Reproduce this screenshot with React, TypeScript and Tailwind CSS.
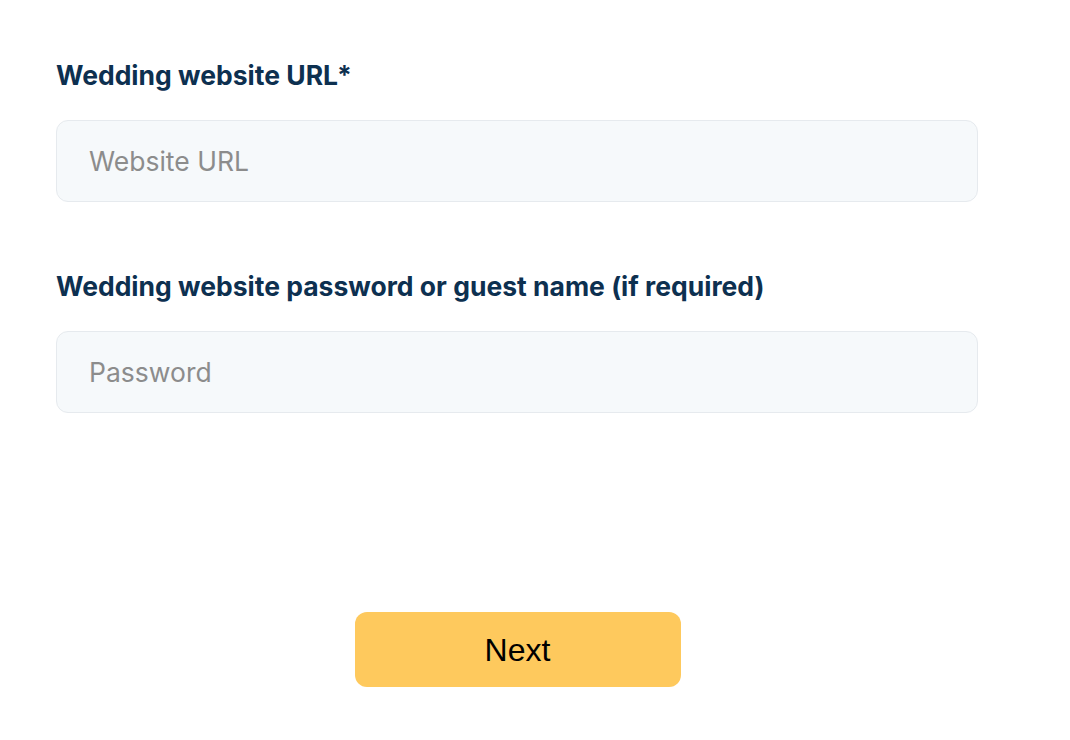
import React from "react";

export default function App() {
  return (
    <div className="min-h-screen bg-white" style={{ fontFamily: "Inter, 'Noto Sans', sans-serif" }}>
      <div className="pl-[56px] pt-[58px] w-[978px]">
        <label className="block text-[26.5px] leading-[34px] font-bold text-[#0d3050]">Wedding website URL*</label>
        <input
          className="mt-[28px] block w-[922px] h-[82px] rounded-[12px] border border-[#e6eaee] bg-[#f6f9fb] px-[32px] text-[26.5px] text-[#333] placeholder-[#8c8c8c] outline-none"
          placeholder="Website URL"
        />
        <label className="mt-[67px] block text-[26.5px] leading-[34px] font-bold text-[#0d3050]">
          Wedding website password or guest name (if required)
        </label>
        <input
          className="mt-[28px] block w-[922px] h-[82px] rounded-[12px] border border-[#e6eaee] bg-[#f6f9fb] px-[32px] text-[26.5px] text-[#333] placeholder-[#8c8c8c] outline-none"
          placeholder="Password"
        />
        <div className="mt-[199px] flex justify-center w-[922px]">
          <button className="ml-[1px] w-[326px] h-[75px] rounded-[12px] bg-[#fec95d] text-[32px] text-black" style={{ fontFamily: "'Liberation Sans', Arial, sans-serif" }}>
            Next
          </button>
        </div>
      </div>
    </div>
  );
}
